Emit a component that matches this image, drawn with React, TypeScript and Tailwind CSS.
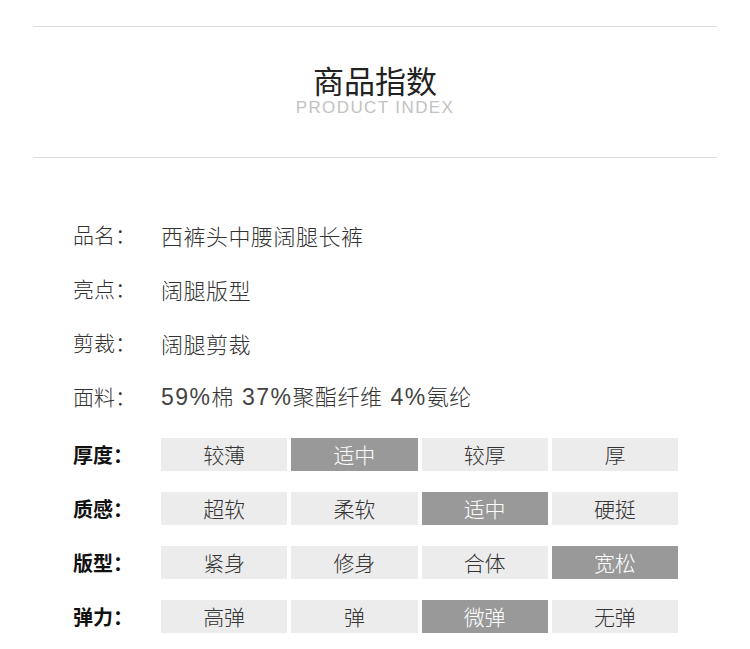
const info = [
  { label: "品名：", value: "西裤头中腰阔腿长裤" },
  { label: "亮点：", value: "阔腿版型" },
  { label: "剪裁：", value: "阔腿剪裁" },
];

const scales = [
  { label: "厚度：", options: ["较薄", "适中", "较厚", "厚"], active: 1 },
  { label: "质感：", options: ["超软", "柔软", "适中", "硬挺"], active: 2 },
  { label: "版型：", options: ["紧身", "修身", "合体", "宽松"], active: 3 },
  { label: "弹力：", options: ["高弹", "弹", "微弹", "无弹"], active: 2 },
];

const latin = '"Liberation Sans", Arial, sans-serif';

function Num({ children }: { children: string }) {
  return (
    <span className="text-[23px] tracking-[1.5px] text-[#444]" style={{ fontFamily: latin }}>
      {children}
    </span>
  );
}

export default function App() {
  return (
    <div
      className="w-[750px] h-[649px] bg-white overflow-hidden px-[33px] pt-[26px]"
      style={{ fontFamily: '"Noto Sans CJK SC", "Noto Sans", sans-serif' }}
    >
      <div className="h-px bg-[#dcdcdc]" />

      <div className="flex flex-col items-center pt-[37px] h-[130px]">
        <h1 className="text-[31px] leading-[32px] text-[#222] font-normal">商品指数</h1>
        <p
          className="text-[17px] leading-[18px] tracking-[1.4px] text-[#c2c2c2] mt-[3px]"
          style={{ fontFamily: latin }}
        >
          PRODUCT INDEX
        </p>
      </div>

      <div className="h-px bg-[#dcdcdc]" />

      <div className="pl-[40px] pt-[50px]">
        {info.map((row) => (
          <div key={row.label} className="flex items-center h-[54px] text-[#333] font-light">
            <span className="w-[88px] text-[21px]">{row.label}</span>
            <span className="text-[22px] tracking-[0.5px]">{row.value}</span>
          </div>
        ))}
        <div className="flex items-center h-[54px] text-[#333] font-light">
          <span className="w-[88px] text-[21px]">面料：</span>
          <span className="text-[22px] tracking-[0.5px]">
            <Num>59%</Num>棉<Num> 37%</Num>聚酯纤维<Num> 4%</Num>氨纶
          </span>
        </div>

        <div className="mt-[14px] flex flex-col gap-[21px]">
          {scales.map((row) => (
            <div key={row.label} className="flex items-center h-[33px]">
              <span className="w-[88px] text-[20px] font-bold text-[#111]">{row.label}</span>
              <div className="grid grid-cols-4 gap-[4px] w-[517px]">
                {row.options.map((opt, i) => (
                  <div
                    key={opt + i}
                    className={
                      i === row.active
                        ? "h-[33px] flex items-center justify-center bg-[#999999] text-white text-[21px] font-light"
                        : "h-[33px] flex items-center justify-center bg-[#ececec] text-[#333] text-[21px] font-light"
                    }
                  >
                    {opt}
                  </div>
                ))}
              </div>
            </div>
          ))}
        </div>
      </div>
    </div>
  );
}
